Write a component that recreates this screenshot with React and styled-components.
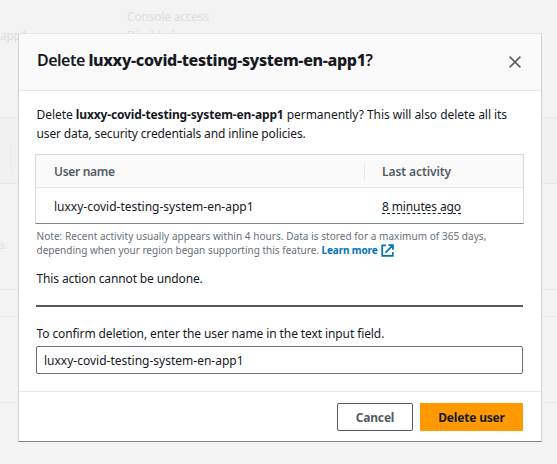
import React from 'react';
import styled, { createGlobalStyle } from 'styled-components';

const GlobalStyle = createGlobalStyle`
  *, *::before, *::after { box-sizing: border-box; }
  body {
    margin: 0;
    overflow: hidden;
    background: #f3f3f3;
    color: #16191f;
    font: 400 12px/19px "Noto Sans", "Open Sans", sans-serif;
  }
`;

const Screen = styled.main`
  display: grid;
  width: 557px;
  height: 464px;
  overflow: hidden;
  & > * { grid-area: 1 / 1; }
`;

const Backdrop = styled.div`
  display: grid;
  grid-template-rows: 118px 66px 106px 27px 86px 1fr;
  color: #dfdfdf;
`;

const Band = styled.section`
  overflow: hidden;
  border-bottom: ${p => (p.$last ? '0' : '1px solid #e8e8e8')};
  background: ${p => (p.$shade ? '#f1f1f1' : '#f3f3f3')};
`;

const ColumnRule = styled.div`
  width: 12px;
  height: 28px;
  margin-top: 26px;
  border-right: 1px solid #eaeaea;
`;

const Summary = styled.div`
  display: grid;
  grid-template-columns: 127px 1fr;
  grid-template-rows: 19px 19px;
  padding-top: 7px;
  white-space: nowrap;
`;

const Faint = styled.span`
  grid-column: ${p => p.$col};
  letter-spacing: -0.2px;
`;

const Hint = styled.p`
  margin: 52px 0 0;
  font-size: 10px;
`;

const Dialog = styled.section`
  display: flex;
  flex-direction: column;
  width: 524px;
  height: 409px;
  margin: 33px 0 0 18px;
  border: 1px solid #cfd1d2;
  border-top-color: #e6e7e7;
  border-bottom-color: #7c8787;
  background: #fff;
`;

const Header = styled.header`
  display: flex;
  align-items: center;
  justify-content: space-between;
  height: 57px;
  padding: 0 20px 4px 18px;
  border-bottom: 1px solid #e6e9e9;
  background: #fafafa;
`;

const Title = styled.h1`
  margin: 0;
  font-size: 16px;
  line-height: 22px;
  font-weight: 600;
  white-space: pre;
  letter-spacing: -0.5px;
`;

const TitleName = styled.strong`
  font-weight: 800;
  letter-spacing: -0.33px;
`;

const CloseButton = styled.button`
  display: flex;
  padding: 3px 0 0;
  border: 0;
  background: none;
  color: #545b64;
`;

const Body = styled.div`
  flex: 1;
  padding: 14px 17px 0 17px;
`;

const Line = styled.span`
  display: block;
  padding-left: 0.5px;
  white-space: pre;
  letter-spacing: ${p => p.$track || 0}px;
`;

const Text = styled.p`
  margin: ${p => p.$top || 0}px 0 0;
`;

const Name = styled.strong`
  font-weight: 700;
  letter-spacing: -0.14px;
`;

const Table = styled.div`
  width: 489px;
  height: 70px;
  margin: 11px 0 0 -1px;
  border: 1px solid #d8dbdb;
  border-bottom-color: #7c8787;
`;

const Row = styled.div`
  display: grid;
  grid-template-columns: 328px 1fr;
  align-items: center;
  height: ${p => (p.$head ? 33 : 35)}px;
  padding-top: ${p => (p.$head ? 0 : 1)}px;
  border-bottom: ${p => (p.$head ? '1px solid #e6e9e9' : '0')};
  background: ${p => (p.$head ? '#fafafa' : '#fff')};
  color: ${p => (p.$head ? '#545b64' : '#16191f')};
  font-weight: ${p => (p.$head ? 600 : 400)};
`;

const Cell = styled.div`
  padding-left: 17px;
  line-height: 19px;
  letter-spacing: ${p => p.$track || 0}px;
  border-left: ${p => (p.$rule ? '1px solid #e8ebeb' : '1px solid transparent')};
`;

const Activity = styled.span`
  display: block;
  width: max-content;
  height: 17px;
  margin-top: -2px;
  line-height: 19px;
  border-bottom: 1px dashed #16191f;
`;

const Note = styled.div`
  margin-top: 5px;
  color: #687078;
  font-size: 10px;
  line-height: 14px;
`;

const Link = styled.a`
  color: #0073bb;
  font-weight: 700;
  letter-spacing: -0.14px;
`;

const LinkIcon = styled.svg`
  margin: -3px 0 -1px 3px;
  vertical-align: -2px;
`;

const Divider = styled.hr`
  height: 2px;
  margin: 17px 1px 17px 0;
  border: 0;
  background: #545b5b;
`;

const Input = styled.input`
  display: block;
  width: 487px;
  height: 28px;
  margin-top: 3px;
  padding: 1px 7px 0;
  border: 1px solid #687078;
  border-radius: 2px;
  outline: 0;
  background: #fff;
  color: #16191f;
  font: inherit;
`;

const Footer = styled.footer`
  display: flex;
  justify-content: flex-end;
  gap: 7px;
  height: 50px;
  padding: 11px 18px 0;
  border-top: 1px solid #e8eaea;
`;

const Button = styled.button`
  width: ${p => (p.$primary ? 103 : 76)}px;
  height: 28px;
  padding: 0;
  border: 1px solid ${p => (p.$primary ? '#ff9900' : '#545b64')};
  border-radius: ${p => (p.$primary ? 0 : 2)}px;
  background: ${p => (p.$primary ? '#ff9900' : '#fff')};
  color: ${p => (p.$primary ? '#16191f' : '#545b64')};
  font: inherit;
  font-weight: 700;
  letter-spacing: -0.18px;
`;

const USER = 'luxxy-covid-testing-system-en-app1';

export default function App() {
  return (
    <>
      <GlobalStyle />
      <Screen>
        <Backdrop aria-hidden="true">
          <Band>
            <Summary>
              <Faint $col={2}>Console access</Faint>
              <Faint $col={1}>app1</Faint>
              <Faint $col={2}>Disabled</Faint>
            </Summary>
          </Band>
          <Band $shade><ColumnRule /></Band>
          <Band><Hint>s.</Hint></Band>
          <Band />
          <Band />
          <Band $last />
        </Backdrop>
        <Dialog role="dialog">
          <Header>
            <Title>Delete <TitleName>{USER}</TitleName>?</Title>
            <CloseButton aria-label="Close">
              <svg width="12" height="12" viewBox="0 0 12 12" fill="none" stroke="currentColor" strokeWidth="1.5">
                <path d="M.6.6l10.8 10.8M11.4.6L.6 11.4" />
              </svg>
            </CloseButton>
          </Header>
          <Body>
            <Text>
              <Line $track={-0.04}>Delete <Name>{USER}</Name> permanently? This will also delete all its</Line>
              <Line $track={-0.13}>user data, security credentials and inline policies.</Line>
            </Text>
            <Table>
              <Row $head>
                <Cell $track={-0.3}>User name</Cell>
                <Cell $rule $track={-0.09}>Last activity</Cell>
              </Row>
              <Row>
                <Cell>{USER}</Cell>
                <Cell $track={-0.12}><Activity>8 minutes ago</Activity></Cell>
              </Row>
            </Table>
            <Note>
              <Line $track={0.045}>Note: Recent activity usually appears within 4 hours. Data is stored for a maximum of 365 days,</Line>
              <Line>
                depending when your region began supporting this feature.{' '}
                <Link>
                  Learn more
                  <LinkIcon width="13" height="13" viewBox="0 0 13 13" fill="none" stroke="currentColor" strokeWidth="1.7">
                    <path d="M5 1.3H1.2v10.5h10.6V8M7.5 1.2h4.4v4.5M11.7 1.4L4.5 8.6" />
                  </LinkIcon>
                </Link>
              </Line>
            </Note>
            <Text $top={12}><Line $track={-0.13}>This action cannot be undone.</Line></Text>
            <Divider />
            <Text><Line $track={-0.1}>To confirm deletion, enter the user name in the text input field.</Line></Text>
            <Input defaultValue={USER} />
          </Body>
          <Footer>
            <Button>Cancel</Button>
            <Button $primary>Delete user</Button>
          </Footer>
        </Dialog>
      </Screen>
    </>
  );
}
